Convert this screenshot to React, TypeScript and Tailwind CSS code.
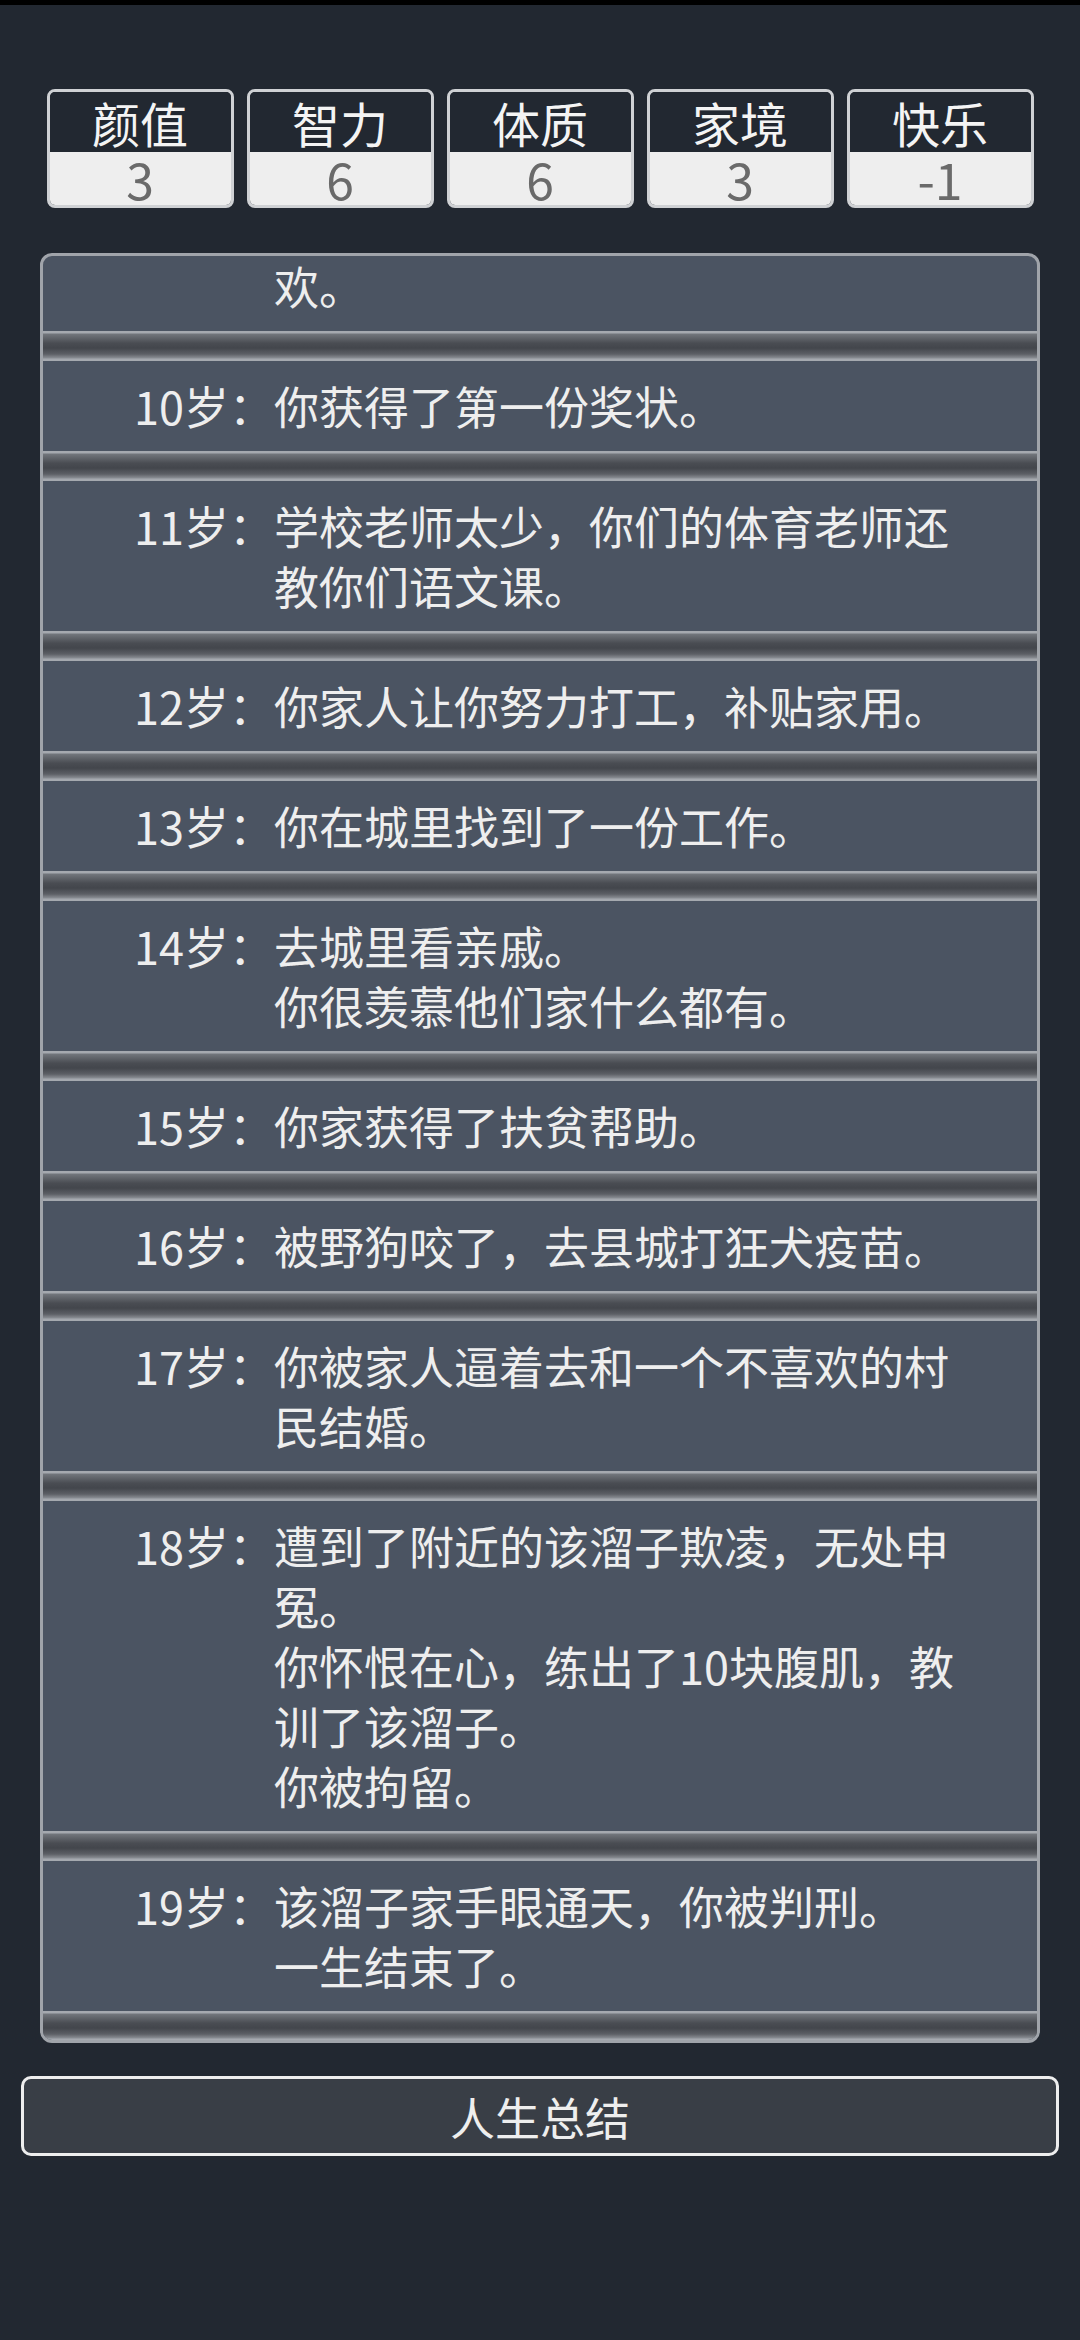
import React from "react";

type Attr = { label: string; value: string };
type Record = { age: number | null; lines: string[] };

const attrs: Attr[] = [
  { label: "颜值", value: "3" },
  { label: "智力", value: "6" },
  { label: "体质", value: "6" },
  { label: "家境", value: "3" },
  { label: "快乐", value: "-1" },
];

const records: Record[] = [
  { age: 10, lines: ["你获得了第一份奖状。"] },
  { age: 11, lines: ["学校老师太少，你们的体育老师还教你们语文课。"] },
  { age: 12, lines: ["你家人让你努力打工，补贴家用。"] },
  { age: 13, lines: ["你在城里找到了一份工作。"] },
  { age: 14, lines: ["去城里看亲戚。", "你很羡慕他们家什么都有。"] },
  { age: 15, lines: ["你家获得了扶贫帮助。"] },
  { age: 16, lines: ["被野狗咬了，去县城打狂犬疫苗。"] },
  { age: 17, lines: ["你被家人逼着去和一个不喜欢的村民结婚。"] },
  {
    age: 18,
    lines: [
      "遭到了附近的该溜子欺凌，无处申冤。",
      "你怀恨在心，练出了10块腹肌，教训了该溜子。",
      "你被拘留。",
    ],
  },
  { age: 19, lines: ["该溜子家手眼通天，你被判刑。", "一生结束了。"] },
];

const Separator = () => (
  <div className="h-[30px] shrink-0 bg-[linear-gradient(180deg,#a5a9af_0px,#a5a9af_2px,#72767c_3px,#4a4d53_12px,#43464c_17px,#5c5f65_23px,#898d93_27px,#a5a9af_28px,#a5a9af_30px)]" />
);

const AttrBox = ({ label, value }: Attr) => (
  <div className="w-[187px] h-[119px] flex flex-col rounded-[8px] border-[3px] border-[#cfd1d4] overflow-hidden">
    <div className="h-[60px] flex items-center justify-center bg-[#222831] text-[#f4f4f4] text-[48px] leading-[60px]">
      {label}
    </div>
    <div className="h-[53px] flex items-center justify-center bg-[#eeeeee] text-[#6a6a6a] text-[50px] leading-[53px]">
      {value}
    </div>
  </div>
);

const RecordRow = ({ age, lines }: Record) => (
  <div className="flex py-[15px] text-[45px] leading-[60px] text-[#eeeeee]">
    <span className="w-[231px] shrink-0 text-right">{age}岁：</span>
    <div className="w-[700px]">
      {lines.map((l, i) => (
        <div key={i}>{l}</div>
      ))}
    </div>
  </div>
);

export default function App() {
  return (
    <div
      className="min-h-[2340px] bg-[#222831] flex flex-col"
      style={{ fontFamily: '"Noto Sans CJK SC", "Noto Sans", sans-serif' }}
    >
      <div className="h-[5px] bg-black" />

      <div className="mt-[84px] flex justify-center gap-[13px]">
        {attrs.map((a) => (
          <AttrBox key={a.label} {...a} />
        ))}
      </div>

      <div className="mt-[45px] mx-[40px] h-[1790px] rounded-[12px] border-[3px] border-[#a0a4aa] bg-[#4b5462] overflow-hidden flex flex-col">
        {/* scrolled: tail of the previous record */}
        <div className="flex pb-[15px] text-[45px] leading-[60px] text-[#eeeeee]">
          <span className="w-[231px] shrink-0" />
          <div>欢。</div>
        </div>
        <Separator />
        {records.map((r) => (
          <React.Fragment key={r.age}>
            <RecordRow {...r} />
            <Separator />
          </React.Fragment>
        ))}
      </div>

      <button className="mt-[33px] mx-[21px] h-[80px] rounded-[10px] border-[3px] border-[#eeeeee] bg-[#393e46] text-[45px] leading-none text-[#eeeeee]">
        人生总结
      </button>
    </div>
  );
}
